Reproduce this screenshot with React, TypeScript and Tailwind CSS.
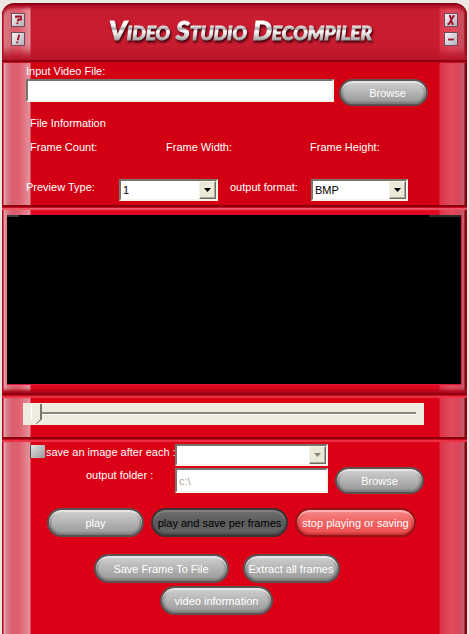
import { useState } from "react";
import type { ReactNode } from "react";
import clsx from "clsx";

// the light bands that run down both sides of the skin
const rails =
  "bg-[linear-gradient(to_right,#a80018_0px,#a80018_1px,#f2a9b4_2px,#d98591_4px,#d9606f_10px,#e0606e_17px,#e2929b_28px,transparent_29px,transparent_calc(100%-28px),#dc3448_calc(100%-27px),#e04a5c_calc(100%-16px),#d9475a_calc(100%-8px),#c2606c_calc(100%-3px),#7c0010_calc(100%-2px),#7c0010_100%)]";

const sunken =
  "border-2 border-t-[#77756c] border-l-[#77756c] border-r-[#f6f3ea] border-b-[#f6f3ea] rounded-none outline-none";

function Divider() {
  return (
    <div className="shrink-0">
      <div className="h-[2px] bg-[#8c0010]" />
      <div className="h-px bg-[#c80a20]" />
    </div>
  );
}

function CornerButton({ label, children }: { label: string; children: ReactNode }) {
  return (
    <button
      type="button"
      aria-label={label}
      className="flex h-[14px] w-[14px] items-center justify-center border border-[#6f4a55] bg-linear-to-br from-[#f6f3f6] to-[#b4b0b8]"
    >
      <svg viewBox="0 0 12 12" className="h-3 w-3 shrink-0" fill="none" stroke="#a30f26" strokeWidth="1.8">
        {children}
      </svg>
    </button>
  );
}

function PillButton({
  children,
  tone = "silver",
  className,
}: {
  children: ReactNode;
  tone?: "silver" | "dark" | "red";
  className?: string;
}) {
  return (
    <button
      type="button"
      className={clsx(
        "shrink-0 rounded-full border-2 text-center whitespace-nowrap",
        tone === "silver" &&
          "border-[#5c5052] bg-linear-to-b from-[#d2d2d2] via-[#b4b4b4] to-[#979797] text-white shadow-[inset_0_2px_1px_#e6e6e6,inset_0_-2px_2px_#7c7c7c,inset_2px_0_2px_#858585,inset_-2px_0_2px_#858585]",
        tone === "dark" &&
          "border-[#3d3133] bg-linear-to-b from-[#6e6e6e] via-[#5c5c5c] to-[#666666] text-black shadow-[inset_0_2px_1px_#828282,inset_0_-2px_2px_#484848]",
        tone === "red" &&
          "border-[#941418] bg-linear-to-b from-[#f58a8a] via-[#ef6060] to-[#ec5050] text-white shadow-[inset_0_2px_1px_#ffb4b4,inset_0_-2px_2px_#c93436,inset_2px_0_2px_#d24446,inset_-2px_0_2px_#d24446]",
        className
      )}
    >
      {children}
    </button>
  );
}

function ComboBox({
  id,
  label,
  options,
  disabled,
  className,
}: {
  id: string;
  label?: string;
  options: string[];
  disabled?: boolean;
  className?: string;
}) {
  return (
    <div className={clsx("relative shrink-0", className)}>
      <select
        id={id}
        aria-label={label}
        disabled={disabled}
        className={clsx(sunken, "block h-[22px] w-full appearance-none bg-white px-[2px] text-[11px] leading-4 text-black")}
      >
        {options.map((o) => (
          <option key={o}>{o}</option>
        ))}
      </select>
      <span className="pointer-events-none absolute top-[2px] right-[2px] flex h-[18px] w-[17px] items-center justify-center border border-t-[#f6f3ea] border-l-[#f6f3ea] border-r-[#6d6b62] border-b-[#6d6b62] bg-[#ece9d8] shadow-[inset_-1px_-1px_#aca899]">
        <svg viewBox="0 0 7 4" className="h-1 w-[7px]" fill={disabled ? "#8a887c" : "#000"}>
          <path d="M0 0h7L3.5 4z" />
        </svg>
      </span>
    </div>
  );
}

export default function App() {
  const [position, setPosition] = useState(0);
  const [saveEach, setSaveEach] = useState(false);

  return (
    <div className="flex min-h-screen flex-col bg-[#ece9e2] pt-[3px] font-['Liberation_Sans',Arial,sans-serif] text-[11px] leading-4 text-white">
      <main className="mx-[2px] flex flex-1 flex-col">
        <header
          className={clsx(
            rails,
            "flex h-[57px] items-start justify-between rounded-t-[12px] border-t-2 border-[#8c0014] bg-[#c81c30] px-[9px] pt-2 shadow-[inset_0_3px_3px_#b01024,inset_0_-8px_8px_#b8162a]"
          )}
        >
          <div className="flex flex-col gap-[5px]">
            <CornerButton label="Help">
              <path d="M4 4V2.500h5V5.500H6.200L5.800 7.500M5.500 8.500 5.200 10.200" />
            </CornerButton>
            <CornerButton label="About">
              <path d="M7.200 1.800 5.800 7.200M5.400 8.500 5 10.200" />
            </CornerButton>
          </div>
          <div className="pt-px pl-3">
            <h1 className="bg-[linear-gradient(to_bottom,#ffffff_11px,#a6a6a6_15px,#ffffff_17px,#d0d0d0_22px,#9a9a9a_27px)] bg-clip-text px-1 font-['Lato',sans-serif] text-[27px] leading-8 font-black whitespace-nowrap text-transparent italic [font-variant:small-caps] [-webkit-text-stroke:1px_transparent] drop-shadow-[1px_2px_1px_#3c0008]">
              Video Studio Decompiler
            </h1>
          </div>
          <div className="flex flex-col gap-[5px]">
            <CornerButton label="Close">
              <path d="M4 2h1l2.500 8h1M9.500 2H8.500L4 10H2.500" />
            </CornerButton>
            <CornerButton label="Minimize">
              <path d="M3 6.500h6" />
            </CornerButton>
          </div>
        </header>
        <Divider />

        <section className={clsx(rails, "bg-[#d30013] pb-1 pl-6")}>
          <label htmlFor="video" className="block">
            Input Video File:
          </label>
          <div className="flex items-start gap-[5px] pr-[39px]">
            <input id="video" type="text" className={clsx(sunken, "h-[23px] min-w-0 flex-1 bg-white px-1 text-black")} />
            <PillButton className="h-[27px] w-[89px] pl-2">Browse</PillButton>
          </div>
          <h2 className="mt-[9px] pl-1">File Information</h2>
          <div className="mt-2 flex pl-1">
            <span className="w-[136px]">Frame Count:</span>
            <span className="w-36">Frame Width:</span>
            <span>Frame Height:</span>
          </div>
          <div className="mt-6 flex items-start">
            <label htmlFor="preview" className="w-[93px]">
              Preview Type:
            </label>
            <ComboBox id="preview" options={["1", "2", "3"]} className="w-[99px]" />
            <label htmlFor="format" className="w-[93px] pl-3">
              output format:
            </label>
            <ComboBox id="format" options={["BMP", "JPG"]} className="w-[97px]" />
          </div>
        </section>
        <Divider />

        <section className={clsx(rails, "bg-[#e00a20] px-[5px] pt-[7px] pb-[8px] shadow-[inset_0_2px_1px_#ee5464,inset_0_-3px_3px_#b00418]")}>
          <div className="flex h-[170px] items-start justify-between border-r border-b border-[#e0183c] bg-black">
            <span className="h-[2px] w-3 bg-[#3a3a3a]" />
            <span className="h-[2px] w-8 bg-[#2a2a2a]" />
          </div>
        </section>
        <Divider />

        <section className={clsx(rails, "bg-[#dc0016] pt-[7px] pr-[43px] pb-3 pl-[21px] shadow-[inset_0_2px_1px_#ee3044]")}>
          <input
            type="range"
            aria-label="Frame position"
            min={0}
            max={100}
            value={position}
            onChange={(e) => setPosition(Number(e.target.value))}
            className="block h-[22px] w-full appearance-none bg-[#efebde] px-2 [&::-webkit-slider-runnable-track]:h-[20px] [&::-webkit-slider-runnable-track]:bg-[linear-gradient(to_bottom,transparent_8px,#8a887c_8px,#8a887c_10px,#ffffff_10px,#ffffff_11px,transparent_11px)] [&::-webkit-slider-thumb]:h-[20px] [&::-webkit-slider-thumb]:w-[11px] [&::-webkit-slider-thumb]:appearance-none [&::-webkit-slider-thumb]:bg-[linear-gradient(135deg,transparent_17px,#77756c_17px),linear-gradient(to_right,#ffffff_1px,#efebde_1px,#efebde_9px,#77756c_9px)] [&::-webkit-slider-thumb]:[clip-path:polygon(0_0,100%_0,100%_75%,50%_100%,0_75%)]"
          />
        </section>
        <Divider />

        <section className={clsx(rails, "flex-1 bg-[#dc0016] pt-1 shadow-[inset_0_2px_1px_#ee3044]")}>
          <div className="flex items-start pl-7">
            <input
              id="saveEach"
              type="checkbox"
              checked={saveEach}
              onChange={(e) => setSaveEach(e.target.checked)}
              className="mt-px h-[13px] w-[15px] appearance-none border-l border-[#554a4c] bg-linear-to-br from-[#e2e2e2] to-[#9a9a9a] checked:from-[#777777]"
            />
            <label htmlFor="saveEach" className="w-[130px] pl-px whitespace-nowrap">
              save an image after each :
            </label>
            <ComboBox id="interval" label="Frame interval" options={[""]} disabled className="w-[153px]" />
          </div>
          <div className="mt-px flex items-start">
            <label htmlFor="folder" className="w-[173px] pl-[84px]">
              output folder :
            </label>
            <input
              id="folder"
              type="text"
              defaultValue="c:\"
              disabled
              className={clsx(sunken, "mt-px h-[25px] w-[153px] bg-white px-[2px] text-[#aca899]")}
            />
            <PillButton className="ml-[7px] h-[27px] w-[89px]">Browse</PillButton>
          </div>
          <div className="mt-[14px] flex justify-center gap-[7px] pr-[6px]">
            <PillButton className="h-[29px] w-[97px]">play</PillButton>
            <PillButton tone="dark" className="h-[29px] w-[137px]">
              play and save per frames
            </PillButton>
            <PillButton tone="red" className="h-[29px] w-[121px]">
              stop playing or saving
            </PillButton>
          </div>
          <div className="mt-[17px] flex justify-center gap-[14px] pr-9">
            <PillButton className="h-[29px] w-[135px]">Save Frame To File</PillButton>
            <PillButton className="h-[29px] w-[97px]">Extract all frames</PillButton>
          </div>
          <div className="mt-[3px] flex justify-center pr-9 pb-4">
            <PillButton className="h-[29px] w-[113px]">video information</PillButton>
          </div>
        </section>
      </main>
    </div>
  );
}
